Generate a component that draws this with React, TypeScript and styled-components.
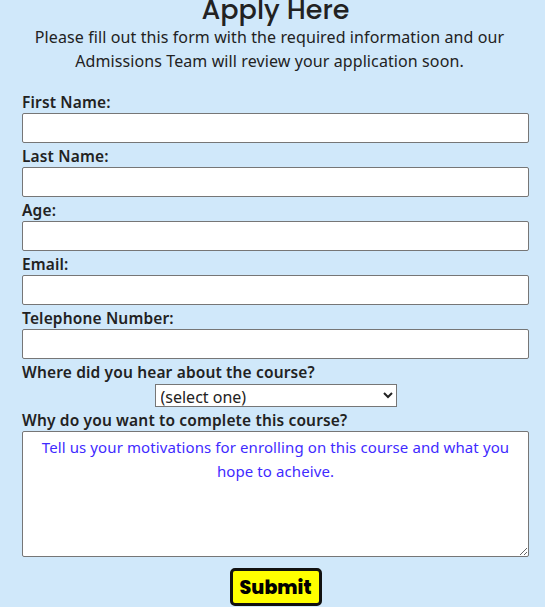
import React from "react";
import styled, { createGlobalStyle } from "styled-components";

const Global = createGlobalStyle`
  html, body { margin: 0; padding: 0; background: #d0e8fa; }
  body { font-family: "Noto Sans", sans-serif; color: #222; overflow: hidden; }
  * { box-sizing: border-box; }
`;

const Page = styled.main`
  padding: 0 16px 0 22px;
  margin-top: -8px;
`;

const Title = styled.h1`
  margin: 0;
  padding-top: 3px;
  text-align: center;
  font-family: "Poppins", "Lato", sans-serif;
  font-weight: 500;
  font-size: 27px;
  line-height: 29px;
`;

const Intro = styled.p`
  margin: 1px 0 19px;
  text-align: center;
  font-size: 16px;
  line-height: 24px;
  letter-spacing: 0.1px;
  padding: 0 12px 0 0;
`;

const Form = styled.form`
  display: flex;
  flex-direction: column;
`;

const Label = styled.label`
  display: block;
  font-size: 15.5px;
  font-weight: 600;
  line-height: 21px;
  letter-spacing: 0.15px;
`;

const TextInput = styled.input`
  display: block;
  width: 100%;
  height: 30px;
  margin: 0 0 3px;
  border: 1px solid #767676;
  border-radius: 2px;
  background: #fff;
  font: inherit;
`;

const SelectRow = styled.div`
  display: flex;
  justify-content: center;
  margin: 1px 0 3px;
`;

const Select = styled.select`
  width: 242px;
  height: 23px;
  border: 1px solid #767676;
  border-radius: 0;
  background: #fff;
  font-family: "Noto Sans", sans-serif;
  font-size: 16px;
  color: #222;
  padding: 0 1px;
`;

const TextArea = styled.textarea`
  display: block;
  width: 100%;
  height: 126px;
  border: 1px solid #767676;
  border-radius: 2px;
  background: #fff;
  resize: vertical;
  padding: 3px 12px;
  font-family: "Noto Sans", sans-serif;
  font-size: 15px;
  line-height: 24px;
  letter-spacing: 0.1px;
  text-align: center;
  color: #3f2bff;
  &::placeholder { color: #3f2bff; opacity: 1; }
`;

const ButtonRow = styled.div`
  display: flex;
  justify-content: center;
  margin-top: 11px;
`;

const Submit = styled.button`
  background: #ffff00;
  border: 3px solid #111;
  border-radius: 5px;
  width: 92px;
  height: 38px;
  padding: 0;
  font-family: "Poppins", "Lato", sans-serif;
  font-weight: 800;
  font-size: 19px;
  color: #000;
`;

const fields = ["First Name:", "Last Name:", "Age:", "Email:", "Telephone Number:"];

export default function App() {
  return (
    <>
      <Global />
      <Page>
        <Title>Apply Here</Title>
        <Intro>
          Please fill out this form with the required information and our
          <br />
          Admissions Team will review your application soon.
        </Intro>
        <Form onSubmit={(e) => e.preventDefault()}>
          {fields.map((f) => (
            <React.Fragment key={f}>
              <Label>{f}</Label>
              <TextInput type="text" />
            </React.Fragment>
          ))}
          <Label>Where did you hear about the course?</Label>
          <SelectRow>
            <Select defaultValue="">
              <option value="">(select one)</option>
              <option>Social media</option>
              <option>Friend</option>
            </Select>
          </SelectRow>
          <Label>Why do you want to complete this course?</Label>
          <TextArea placeholder="Tell us your motivations for enrolling on this course and what you hope to acheive." />
          <ButtonRow>
            <Submit type="submit">Submit</Submit>
          </ButtonRow>
        </Form>
      </Page>
    </>
  );
}
